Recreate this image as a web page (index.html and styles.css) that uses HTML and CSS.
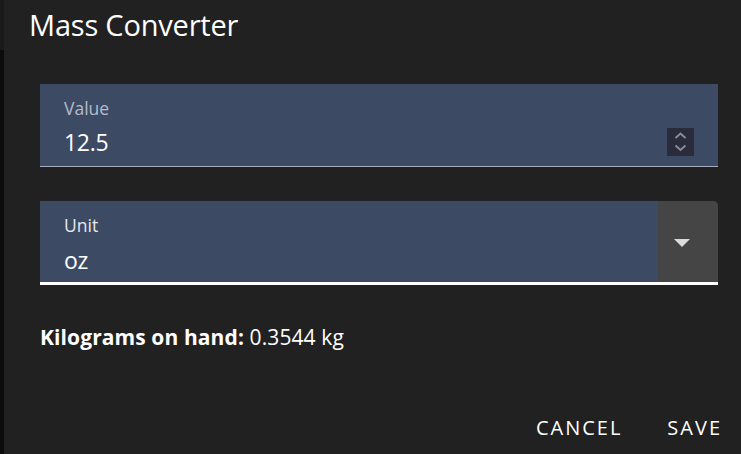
FILE: index.html
```html
<!DOCTYPE html>
<html lang="en">
<head>
<meta charset="utf-8">
<title>Mass Converter</title>
<link rel="stylesheet" href="styles.css">
</head>
<body>
<div class="screen">
  <div class="backdrop-edge"></div>
  <div class="dialog">
    <h2 class="dialog-title">Mass Converter</h2>
    <div class="dialog-content">
      <div class="field field-number">
        <label class="field-label">Value</label>
        <div class="input-row">
          <span class="field-value">12.5</span>
          <span class="spinner">
            <svg width="27" height="28" viewBox="0 0 27 28" aria-hidden="true">
              <polyline points="8.5,10 13.5,5.5 18.5,10" fill="none" stroke="#8b8d9d" stroke-width="1.8"/>
              <polyline points="8.5,17.5 13.5,22 18.5,17.5" fill="none" stroke="#8b8d9d" stroke-width="1.8"/>
            </svg>
          </span>
        </div>
      </div>
      <div class="field field-select">
        <div class="select-main">
          <label class="field-label label-focused">Unit</label>
          <div class="input-row select-row">
            <span class="field-value">oz</span>
          </div>
        </div>
        <div class="select-button">
          <svg width="16" height="8" viewBox="0 0 16 8" aria-hidden="true">
            <polygon points="0,0 16,0 8,8" fill="#dcdcdc"/>
          </svg>
        </div>
      </div>
      <p class="result"><strong>Kilograms on hand:</strong> 0.3544 kg</p>
    </div>
    <div class="dialog-actions">
      <button class="action-btn">CANCEL</button>
      <button class="action-btn">SAVE</button>
    </div>
  </div>
</div>
</body>
</html>
```

FILE: styles.css
```css
* { box-sizing: border-box; }

html, body {
  margin: 0;
  padding: 0;
  width: 741px;
  height: 454px;
  overflow: hidden;
  background: #212121;
  font-family: "Open Sans", "Noto Sans", sans-serif;
  color: #ffffff;
}

.screen {
  display: flex;
  width: 741px;
  height: 454px;
}

.backdrop-edge {
  width: 4px;
  flex: none;
  background: linear-gradient(#1a1a1a 0 50px, #0c0c0c 50px);
}

.dialog {
  flex: 1;
  display: flex;
  flex-direction: column;
  background: #212121;
  padding-top: 5px;
}

.dialog-title {
  margin: 0;
  padding-left: 25px;
  font-size: 29px;
  font-weight: 400;
  line-height: 40px;
  letter-spacing: -0.2px;
  color: #ffffff;
}

.dialog-content {
  padding: 39px 23px 0 36px;
}

.field {
  background: #3d4a63;
}

.field-number {
  padding: 14px 24px 10px 24px;
  border-bottom: 1px solid #a3abbd;
}

.field-label {
  display: block;
  font-size: 17.5px;
  line-height: 20px;
  color: #b4bccb;
}

.label-focused {
  color: #e6e8ec;
}

.input-row {
  display: flex;
  align-items: center;
  justify-content: space-between;
  margin-top: 10px;
  height: 28px;
}

.field-value {
  font-size: 23px;
  line-height: 28px;
  color: #ffffff;
  letter-spacing: -0.3px;
}

.spinner {
  display: flex;
  width: 27px;
  height: 28px;
  background: #2b2c3b;
}

.field-select {
  display: flex;
  margin-top: 34px;
  border-bottom: 3px solid #ffffff;
  border-top-right-radius: 5px;
  overflow: hidden;
}

.select-main {
  flex: 1;
  padding: 14px 24px 8px 24px;
}

.select-row {
  margin-top: 11px;
}

.select-button {
  width: 60px;
  flex: none;
  background: #454545;
  display: flex;
  align-items: center;
  padding-left: 16px;
  padding-top: 3px;
}

.select-button svg {
  display: block;
}

.result {
  margin: 38px 0 0 0;
  font-size: 21px;
  line-height: 28px;
  letter-spacing: 0.1px;
  color: #ffffff;
}

.result strong {
  font-weight: 700;
}

.dialog-actions {
  margin-top: auto;
  display: flex;
  justify-content: flex-end;
  gap: 21px;
  padding: 0 7px 5px 0;
}

.action-btn {
  background: none;
  border: 0;
  padding: 9px 12px;
  font-family: "Open Sans", "Noto Sans", sans-serif;
  font-size: 20px;
  line-height: 24px;
  letter-spacing: 2px;
  color: #ffffff;
  cursor: pointer;
}
```
